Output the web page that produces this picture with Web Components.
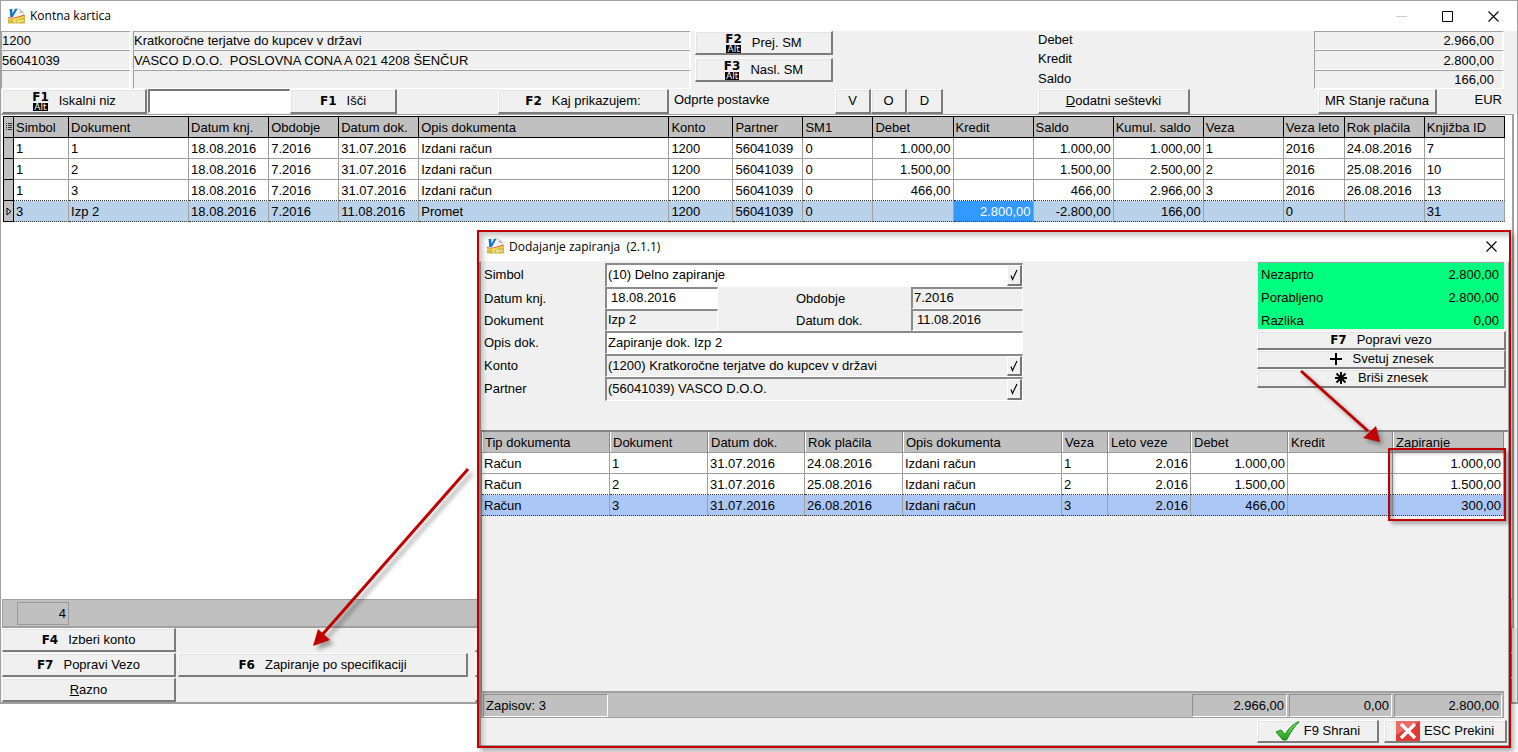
<!DOCTYPE html>
<html lang="sl">
<head>
<meta charset="utf-8">
<title>Kontna kartica</title>
<style>
body { margin: 0; background: #fff; color: #000; font: 13px/18px "Liberation Sans", Arial, sans-serif; }
</style>
</head>
<body>
<ledger-app></ledger-app>

<script>
const RESET = `
  :host, * { box-sizing: border-box; }
  button, input { font: inherit; color: inherit; margin: 0; }
`;

function define(name, markup, setup) {
  const template = document.createElement('template');
  template.innerHTML = markup;
  customElements.define(name, class extends HTMLElement {
    connectedCallback() {
      if (this.shadowRoot) return;
      const root = this.attachShadow({ mode: 'open' });
      root.append(template.content.cloneNode(true));
      if (setup) setup.call(this, root);
    }
  });
}

/* Program logo */
define('app-logo', `
<style>:host { display: block; width: 17px; height: 17px; } svg { display: block; }</style>
<svg width="17" height="17" viewBox="0 0 17 17" aria-hidden="true">
  <path d="M3 1h9l4 4v9H3z" fill="#f2f2ee" stroke="#c9cdd2" stroke-width=".6"/>
  <path d="M12 1v4h4z" fill="#b9bdc2"/>
  <path d="M0 10c5 1.500 9-1 17-2.500V15.500H0z" fill="#d2b93c"/>
  <path d="M0 9.500c5 2 10-.5 16.500-2.500" fill="none" stroke="#e23a28" stroke-width="1"/>
  <path d="M0 10.800c5 1.600 10-.5 16.500-2.300" fill="none" stroke="#f6e04a" stroke-width="1.200"/>
  <path d="M6 12h2M6 12v2h2M9.500 12v2h2v-2zM13 14v-2h2v2" stroke="#fff6c0" stroke-width=".8" fill="none"/>
  <path d="M1.500 1h2.700l.4 4.500L7.200.8h2.400L4.800 9H2.300z" fill="#1277c8"/>
</svg>`);

/* Raised push button with an optional function-key caption */
define('key-button', `
<style>${RESET}
:host { display: flex; min-width: 0; }
button { flex: 1; min-width: 0; display: flex; align-items: center; justify-content: center; gap: 10px; padding: 0;
  background: #f0f0f0; border: solid; border-width: 1px 2px 2px 1px; border-color: #fff #7c7c7c #7c7c7c #fff;
  box-shadow: inset 1px 1px #e3e3e3; border-radius: 0; line-height: 18px; white-space: nowrap; overflow: hidden; }
.key { display: flex; flex-direction: column; align-items: center; font: bold 12px/18px "DejaVu Sans", Verdana, sans-serif; }
.key:empty { display: none; }
.key small { background: #000; color: #fff; font: 9px/8px "DejaVu Sans", sans-serif; padding: 0 1px; height: 8px; }
:host([alt]) .key { line-height: 12px; }
:host([plain]) button { gap: 4px; }
u { text-underline-offset: 2px; }
</style>
<button type="button"><span class="key"></span><slot name="icon"></slot><span><slot></slot></span></button>`,
function (root) {
  const key = root.querySelector('.key');
  const name = this.getAttribute('key') || '';
  if (name === '+' || name === '*') {
    key.innerHTML = name === '+'
      ? '<svg width="14" height="14" viewBox="0 0 14 14"><path d="M7 1v12M1 7h12" stroke="#000" stroke-width="2"/></svg>'
      : '<svg width="14" height="14" viewBox="0 0 14 14"><path d="M7 1v12M1 7h12M2.500 2.500l9 9M11.500 2.500l-9 9" stroke="#000" stroke-width="2"/></svg>';
    root.querySelector('button').setAttribute('aria-keyshortcuts', name);
  } else key.textContent = name;
  if (this.hasAttribute('alt')) key.insertAdjacentHTML('beforeend', '<small>Alt</small>');
});

/* Window caption bar */
define('title-bar', `
<style>${RESET}
:host { display: flex; align-items: center; height: 30px; background: #fff; font: 12px/18px "Open Sans", "Segoe UI", sans-serif; }
.name { flex: 1; padding-left: 5px; white-space: pre; }
button { width: 46px; height: 28px; padding: 0; border: 0; background: none; display: grid; place-items: center; }
:host([dialog]) .size { display: none; }
:host([dialog]) button { width: 36px; }
</style>
<app-logo></app-logo><span class="name"><slot></slot></span>
<button class="size" type="button" aria-label="Pomanjšaj"><svg width="11" height="11"><path d="M0 5.500h11" stroke="#ccc"/></svg></button>
<button class="size" type="button" aria-label="Povečaj"><svg width="11" height="11"><path d="M.5.5h10v10H.5z" fill="none" stroke="#000"/></svg></button>
<button type="button" aria-label="Zapri"><svg width="11" height="11"><path d="M.5.5l10 10M10.500.5l-10 10" stroke="#000" stroke-width="1.100"/></svg></button>`);

/* Data table; data comes from the "model" named by the attribute */
const MODELS = {
  entries: {
    indicator: true,
    columns: [['Simbol', 55], ['Dokument', 120], ['Datum knj.', 80], ['Obdobje', 70], ['Datum dok.', 80], ['Opis dokumenta', 250],
      ['Konto', 64], ['Partner', 70], ['SM1', 70], ['Debet', 80, 'n'], ['Kredit', 80, 'n'], ['Saldo', 80, 'n'], ['Kumul. saldo', 90, 'n'],
      ['Veza', 80], ['Veza leto', 61], ['Rok plačila', 80], ['Knjižba ID', 80]],
    rows: [
      ['1', '1', '18.08.2016', '7.2016', '31.07.2016', 'Izdani račun', '1200', '56041039', '0', '1.000,00', '', '1.000,00', '1.000,00', '1', '2016', '24.08.2016', '7'],
      ['1', '2', '18.08.2016', '7.2016', '31.07.2016', 'Izdani račun', '1200', '56041039', '0', '1.500,00', '', '1.500,00', '2.500,00', '2', '2016', '25.08.2016', '10'],
      ['1', '3', '18.08.2016', '7.2016', '31.07.2016', 'Izdani račun', '1200', '56041039', '0', '466,00', '', '466,00', '2.966,00', '3', '2016', '26.08.2016', '13'],
      ['3', 'Izp 2', '18.08.2016', '7.2016', '11.08.2016', 'Promet', '1200', '56041039', '0', '', '2.800,00', '-2.800,00', '166,00', '', '0', '', '31']
    ],
    selected: 3, cell: 10
  },
  closing: {
    columns: [['Tip dokumenta', 128], ['Dokument', 98], ['Datum dok.', 97], ['Rok plačila', 98], ['Opis dokumenta', 159], ['Veza', 46],
      ['Leto veze', 83, 'n'], ['Debet', 97, 'n'], ['Kredit', 105, 'n'], ['Zapiranje', 111, 'n']],
    rows: [
      ['Račun', '1', '31.07.2016', '24.08.2016', 'Izdani račun', '1', '2.016', '1.000,00', '', '1.000,00'],
      ['Račun', '2', '31.07.2016', '25.08.2016', 'Izdani račun', '2', '2.016', '1.500,00', '', '1.500,00'],
      ['Račun', '3', '31.07.2016', '26.08.2016', 'Izdani račun', '3', '2.016', '466,00', '', '300,00']
    ],
    selected: 2
  }
};
define('data-grid', `
<style>${RESET}
:host { display: block; --sel: #bad1ea; --head-line: #000; }
:host([model=closing]) { --sel: #abc7f5; --head-line: #9a9a9a; }
table { width: 100%; table-layout: fixed; border-collapse: separate; border-spacing: 0; }
th, td { height: 21px; padding: 1px 2px 0; text-align: left; font-weight: normal; line-height: 19px; white-space: nowrap; overflow: hidden;
  border: solid #a0a0a0; border-width: 0 1px 1px 0; background: #fff; }
th { background: #c0c0c0; border-color: var(--head-line); }
:host([model=entries]) table { border-left: 1px solid #000; border-top: 1px solid #000; }
:host([model=closing]) th { border-right-color: #888; box-shadow: inset 1px 0 #fff; padding-left: 3px; }
td.n { text-align: right; }
.mark { background: #c0c0c0; border-color: #000; padding: 0; }
.mark svg { display: block; margin: 0 auto; }
tr.sel td:not(.mark) { background: var(--sel); border-bottom: 1px dotted #333; }
tr.sel td.cell { background: #3399ff !important; color: #fff; }
tr.pre td:not(.mark) { border-bottom: 1px dotted #333; }
</style><table><colgroup></colgroup><thead><tr></tr></thead><tbody></tbody></table>`,
function (root) {
  const m = MODELS[this.getAttribute('model')];
  let cols = m.columns.map(c => `<col style="width:${c[1]}px">`).join('');
  let head = m.columns.map(c => `<th scope="col">${c[0]}</th>`).join('');
  if (m.indicator) {
    cols = '<col style="width:10px">' + cols;
    head = '<td class="mark"><svg width="7" height="10" aria-hidden="true"><path d="M1 1.500h1M3 1.500h4M1 3.500h1M3 3.500h4M1 5.500h1M3 5.500h4M1 7.500h1M3 7.500h4" stroke="#333"/></svg></td>' + head;
  }
  root.querySelector('colgroup').innerHTML = cols;
  root.querySelector('thead tr').innerHTML = head;
  root.querySelector('tbody').innerHTML = m.rows.map((r, i) => {
    const arrow = i === m.selected ? '<svg width="6" height="9" aria-hidden="true"><path d="M1 1l4 3.500L1 8z" fill="#c0c0c0" stroke="#000"/></svg>' : '';
    return `<tr class="${i === m.selected ? 'sel' : i === m.selected - 1 ? 'pre' : ''}">` +
      (m.indicator ? `<td class="mark">${arrow}</td>` : '') +
      r.map((v, j) => `<td class="${m.columns[j][2] || ''}${i === m.selected && j === m.cell ? ' cell' : ''}">${v}</td>`).join('') + '</tr>';
  }).join('');
});

/* Account, partner and totals above the ledger */
define('account-header', `
<style>${RESET}
:host { display: flex; height: 58px; padding: 0 13px 0 0; background: #f0f0f0; }
input { width: 100%; height: 100%; min-width: 0; padding: 0; background: #f0f0f0; border: solid; border-width: 1px 2px 1px 1px;
  border-color: #a0a0a0 #fff #fff #a0a0a0; border-radius: 0; outline: 0; line-height: 17px; }
.info, .sums { display: grid; grid-template-rows: 19px 20px 19px; }
.info { flex: 1; grid-template-columns: 130px 1fr; column-gap: 2px; }
.nav { width: 138px; margin: 0 205px 0 4px; display: grid; grid-template-rows: 24px 24px; row-gap: 3px; }
.sums { grid-template-columns: 276px 190px; }
.sums input { text-align: right; padding-right: 8px; }
</style>
<div class="info">
  <input aria-label="Konto" value="1200" readonly><input aria-label="Naziv konta" value="Kratkoročne terjatve do kupcev v državi" readonly>
  <input aria-label="Partner" value="56041039" readonly><input aria-label="Naziv partnerja" value="VASCO D.O.O.  POSLOVNA CONA A 021 4208 ŠENČUR" readonly>
  <input aria-label="SM" readonly><input aria-label="Naziv SM" readonly>
</div>
<div class="nav"><key-button key="F2" alt>Prej. SM</key-button><key-button key="F3" alt>Nasl. SM</key-button></div>
<div class="sums">
  <label for="d">Debet</label><input id="d" value="2.966,00" readonly>
  <label for="k">Kredit</label><input id="k" value="2.800,00" readonly>
  <label for="s">Saldo</label><input id="s" value="166,00" readonly>
</div>`);

define('ledger-toolbar', `
<style>${RESET}
:host { display: flex; height: 25px; padding: 0 15px 0 1px; background: #f0f0f0; }
.search { width: 142px; margin: 0 0 1px 1px; padding: 0 4px; background: #fff; border: solid; border-width: 2px 1px 1px 2px; border-color: #777 #fff #fff #777; outline: 0; }
.state { flex: 0 0 166px; padding: 2px 0 0 5px; }
.vod { display: grid; grid-template-columns: repeat(3, 36px); }
.grow { flex: 1; }
.cur { width: 65px; text-align: right; padding-top: 2px; }
</style>
<key-button key="F1" alt style="width:145px">Iskalni niz</key-button>
<input class="search" aria-label="Iskalni niz">
<key-button key="F1" style="width:107px">Išči</key-button>
<span class="grow"></span>
<key-button key="F2" style="width:171px">Kaj prikazujem:</key-button>
<span class="state">Odprte postavke</span>
<div class="vod"><key-button>V</key-button><key-button>O</key-button><key-button>D</key-button></div>
<key-button style="width:152px;margin-left:95px"><u>D</u>odatni seštevki</key-button>
<key-button style="width:119px;margin-left:128px">MR Stanje računa</key-button>
<span class="cur">EUR</span>`);

define('ledger-actions', `
<style>${RESET}
:host { display: grid; grid-template: repeat(3, 24px) / 174px 290px 1fr; column-gap: 2px; row-gap: 1px; padding: 0 5px 0 1px; background: #f0f0f0; border-bottom: 2px solid #a0a0a0; }
.mid { grid-area: 2 / 2; }
.side { grid-column: 3; margin-left: 5px; border: solid; border-width: 1px 2px 2px 1px; border-color: #fff #7c7c7c #7c7c7c #fff; }
.a { grid-row: 1; } .b { grid-row: 2; } .c { grid-row: 3; }
key-button:not(.mid) { grid-column: 1; }
</style>
<key-button class="a" key="F4">Izberi konto</key-button>
<key-button class="b" key="F7">Popravi Vezo</key-button>
<key-button class="c"><u>R</u>azno</key-button>
<key-button class="mid" key="F6">Zapiranje po specifikaciji</key-button>
<span class="side a"></span><span class="side b"></span><span class="side c"></span>`);

/* Fields of the closing dialog */
define('closing-form', `
<style>${RESET}
:host { display: grid; grid-template: 24px 22px 22px 23px 23px 24px / 121px 113px 78px 115px 112px; align-items: stretch; }
label { line-height: 23px; }
input { width: 100%; height: 100%; min-width: 0; padding: 0 1px 2px; background: #fff; border: solid; border-width: 2px 1px 1px 2px; border-color: #8a8a8a #fff #fff #8a8a8a; border-radius: 0; outline: 0; line-height: 18px; }
input[readonly] { background: #f0f0f0; }
input.date { padding-left: 4px; }
.wide { grid-column: 2 / 6; display: grid; }
.wide > * { grid-area: 1 / 1; }
.wide button { justify-self: end; width: 15px; margin: 2px 1px 1px 0; padding: 0; background: #f0f0f0; border: solid; border-width: 1px 2px 2px 1px; border-color: #fff #777 #777 #fff; display: grid; place-items: center; }
.c4 { grid-column: 4; }
.c2 { grid-column: 1; }
</style>
<label for="a">Simbol</label><div class="wide"><input id="a" value="(10) Delno zapiranje"><button type="button" aria-label="Izberi simbol"><svg width="8" height="12"><path d="M1 6.500L2.500 10.500L7 1" fill="none" stroke="#000" stroke-width="1.100"/></svg></button></div>
<label for="b">Datum knj.</label><input id="b" class="date" value="18.08.2016"><label class="c4" for="c">Obdobje</label><input id="c" value="7.2016" readonly>
<label class="c2" for="e">Dokument</label><input id="e" value="Izp 2" readonly><label class="c4" for="f">Datum dok.</label><input id="f" class="date" value="11.08.2016" readonly>
<label for="g">Opis dok.</label><div class="wide"><input id="g" value="Zapiranje dok. Izp 2"></div>
<label for="h">Konto</label><div class="wide"><input id="h" value="(1200) Kratkoročne terjatve do kupcev v državi" readonly><button type="button" aria-label="Izberi konto"><svg width="8" height="12"><path d="M1 6.500L2.500 10.500L7 1" fill="none" stroke="#000" stroke-width="1.100"/></svg></button></div>
<label for="i">Partner</label><div class="wide"><input id="i" value="(56041039) VASCO D.O.O." readonly><button type="button" aria-label="Izberi partnerja"><svg width="8" height="12"><path d="M1 6.500L2.500 10.500L7 1" fill="none" stroke="#000" stroke-width="1.100"/></svg></button></div>`);

define('closing-summary', `
<style>${RESET}
:host { display: block; }
dl { margin: 0 2px 0 0; padding: 0 5px 0 3px; height: 67px; display: grid; grid-template: 23px 23px 20px / 1fr auto; line-height: 24px; background: #00ff7f; border-top: 1px solid #a0a0a0; border-left: 1px solid #fff; }
dt, dd { margin: 0; } dd { text-align: right; }
div { display: grid; grid-template-rows: repeat(3, 19px); margin-top: 2px; }
</style>
<dl><dt>Nezaprto</dt><dd>2.800,00</dd><dt>Porabljeno</dt><dd>2.800,00</dd><dt>Razlika</dt><dd>0,00</dd></dl>
<div><key-button key="F7">Popravi vezo</key-button><key-button key="+">Svetuj znesek</key-button><key-button key="*">Briši znesek</key-button></div>`);

define('closing-dialog', `
<style>${RESET}
:host { display: flex; flex-direction: column; background: #f0f0f0; border: 2px solid #c00000; box-shadow: 3px 4px 5px rgba(0,0,0,.3); }
:host::after { content: ""; position: absolute; inset: 0; box-shadow: inset 4px 4px 5px rgba(0,0,0,.22); pointer-events: none; }
title-bar { padding-left: 8px; flex: none; height: 29px; margin-bottom: 1px; }
.body { flex: 1; display: flex; flex-direction: column; border: solid #a0a0a0; border-width: 0 1px 1px 2px; }
.top { display: flex; justify-content: space-between; height: 168px; padding: 0 2px 0 3px; }
closing-summary { width: 249px; }
closing-form { height: 138px; margin-top: 1px; }
.grid { flex: 1; border: solid #858585; border-width: 2px 0 0 1px; padding-right: 4px; }
.total { display: grid; grid-template-columns: 125px 1fr 95px 103px 108px; column-gap: 2px; height: 27px; margin-right: 4px; padding: 1px; background: #c0c0c0; border: solid #a0a0a0; border-width: 2px 1px 1px; }
.total > * { line-height: 21px; text-align: right; padding-right: 2px; }
.total > :not(.gap) { border: solid 1px; border-color: #909090 #fff #fff #909090; }
.total > :first-child { text-align: left; padding-left: 2px; }
.foot { display: flex; justify-content: flex-end; gap: 5px; height: 27px; padding: 2px 1px 2px 0; }
.ok { width: 122px; } .esc { width: 123px; }
.hl { position: absolute; right: 3px; top: 216px; width: 118px; height: 73px; border: 2px solid #c00000; box-shadow: 3px 3px 4px rgba(0,0,0,.3), inset 3px 3px 4px rgba(0,0,0,.3); pointer-events: none; }
.arrow { position: absolute; right: 120px; top: 132px; pointer-events: none; filter: drop-shadow(3px 3px 2px rgba(0,0,0,.35)); }
</style>
<title-bar dialog>Dodajanje zapiranja  (2.1.1)</title-bar>
<div class="body">
  <div class="top"><closing-form></closing-form><closing-summary></closing-summary></div>
  <div class="grid"><data-grid model="closing"></data-grid></div>
  <div class="total"><span>Zapisov: 3</span><span class="gap"></span><span>2.966,00</span><span>0,00</span><span>2.800,00</span></div>
  <div class="foot">
    <key-button plain class="ok"><svg slot="icon" width="25" height="20" viewBox="0 0 25 20" aria-hidden="true"><defs><linearGradient id="g" x2="0" y2="1"><stop stop-color="#8be26a"/><stop offset="1" stop-color="#1f9d1f"/></linearGradient></defs><path d="M1 11l5-2 4 4.500C14 7 18 3 24 .8 19 6 15 12 11.500 19H8z" fill="url(#g)" stroke="#168616"/></svg>F9 Shrani</key-button>
    <key-button plain class="esc"><svg slot="icon" width="24" height="20" viewBox="0 0 24 20" aria-hidden="true"><path d="M0 0h24v20H0z" fill="#e03a36"/><path d="M0 0h24L0 14z" fill="#ee6a62"/><path d="M5 3l14 14M19 3L5 17" stroke="#fff" stroke-width="3.400"/></svg>ESC Prekini</key-button>
  </div>
</div>
<div class="hl"></div>
<svg class="arrow" width="90" height="86" viewBox="1299 364 90 86" aria-hidden="true"><path d="M1301 371L1368 431" stroke="#c00000" stroke-width="3"/><path d="M1380 442l-17-4 13-12z" fill="#c00000"/></svg>`);

define('ledger-app', `
<style>${RESET}
:host { position: relative; display: flex; flex-direction: column; min-height: 100vh; padding-bottom: 48px; }
main { flex: 1; display: flex; flex-direction: column; border: solid #a0a0a0; border-width: 1px 1px 0 1px; }
title-bar { padding: 0 1px 0 7px; }
.sheet { flex: 1; padding: 1px 7px 0 2px; margin-right: 3px; border: solid #a0a0a0; border-width: 1px 2px 0 0; background: #fff; }
.strip { height: 29px; margin: 0 3px 0 1px; padding: 2px 14px; background: #c0c0c0; border: solid #a0a0a0; border-width: 1px 1px 2px; }
output { display: block; width: 52px; height: 23px; border: 1px solid #999; text-align: right; padding: 2px 2px 0; }
closing-dialog { position: absolute; inset: 230px 7px 4px 477px; }
.arrow { position: absolute; left: 305px; top: 462px; pointer-events: none; filter: drop-shadow(4px 4px 2px rgba(0,0,0,.35)); }
</style>
<main>
  <title-bar>Kontna kartica</title-bar>
  <account-header></account-header>
  <ledger-toolbar></ledger-toolbar>
  <div class="sheet"><data-grid model="entries"></data-grid></div>
  <div class="strip"><output aria-label="Število zapisov">4</output></div>
  <ledger-actions></ledger-actions>
</main>
<closing-dialog></closing-dialog>
<svg class="arrow" width="170" height="190" viewBox="305 462 170 190" aria-hidden="true"><path d="M468 469L322 635" stroke="#c00000" stroke-width="3"/><path d="M313 646l5-17 12 11z" fill="#c00000"/></svg>`);
</script>
</body>
</html>
